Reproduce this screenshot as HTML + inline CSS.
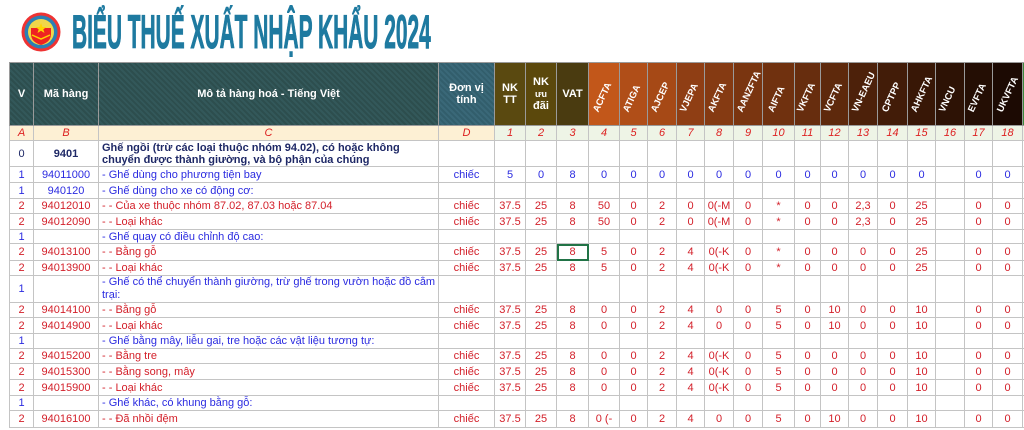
<!DOCTYPE html>
<html><head><meta charset="utf-8"><style>
body{margin:0;width:1024px;height:430px;overflow:hidden;background:#fff;font-family:"Liberation Sans",Arial,sans-serif;position:relative}
.title{position:absolute;left:72px;top:4px;font-weight:bold;font-size:47px;color:#1e7aa0;white-space:nowrap;transform:scaleX(0.445);transform-origin:0 0;-webkit-text-stroke:1px #1e7aa0}
.logo{position:absolute;left:21px;top:11px;width:40px;height:42px}
table{position:absolute;left:9px;top:62px;width:1015px;border-collapse:collapse;table-layout:fixed;font-size:11px}
td{border:1px solid #c4c4c4;padding:0;overflow:hidden;white-space:nowrap;text-align:center;vertical-align:middle}
tr.h td{height:62px;color:#fff;font-weight:bold;font-size:11px;border-color:#9a9a9a;overflow:visible}
.g{background:repeating-linear-gradient(45deg,#2d4e4e 0 2px,#33585a 2px 4px)}
.gb{background:repeating-linear-gradient(45deg,#325e6c 0 2px,#3a6878 2px 4px)}
.r{display:inline-block;transform:rotate(-65deg);white-space:nowrap;font-size:9.5px;width:10px;text-indent:-14px}
tr.l td{height:14px;color:#d22;font-style:italic;background:#eef4e6;font-size:11px}
tr.l td.c{background:#fdf0d4}
td.d{text-align:left;padding-left:3px}
.b0 td{color:#1e2866;font-weight:bold}
.b1 td{color:#2b2be0}
.b2 td{color:#d3202a}
</style></head><body>
<svg class="logo" viewBox="0 0 40 42"><circle cx="20" cy="21" r="19.5" fill="#e33"/><circle cx="20" cy="21" r="16.5" fill="#2b7fb5"/><circle cx="20" cy="21" r="13" fill="#f1d64a"/><path d="M10 17 h20 v6 q0 8 -10 11 q-10 -3 -10 -11z" fill="#e22"/><polygon points="20,12 21.5,16 25.5,16 22.3,18.4 23.5,22 20,19.8 16.5,22 17.7,18.4 14.5,16 18.5,16" fill="#ffd400"/><path d="M11 24 l9 4 l9 -4" stroke="#ffd400" stroke-width="1.5" fill="none"/></svg>
<div class="title">BIỂU THUẾ XUẤT NHẬP KHẨU 2024</div>
<table>
<colgroup><col style="width:24px"><col style="width:65px"><col style="width:340px"><col style="width:56px"><col style="width:31px"><col style="width:31px"><col style="width:32px"><col style="width:31px"><col style="width:28px"><col style="width:29px"><col style="width:28px"><col style="width:29px"><col style="width:29px"><col style="width:32px"><col style="width:26px"><col style="width:28px"><col style="width:29px"><col style="width:30px"><col style="width:28px"><col style="width:29px"><col style="width:28px"><col style="width:30px"><col style="width:2px"></colgroup>
<tr class="h"><td class="g">V</td><td class="g">Mã hàng</td><td class="g">Mô tả hàng hoá - Tiếng Việt</td><td class="gb">Đơn vị<br>tính</td>
<td style="background:#5a4910">NK<br>TT</td><td style="background:#5b480c">NK<br><span style="font-size:9px">ưu</span><br>đãi</td><td style="background:#4a3b10">VAT</td>
<td style="background:#c2571a"><span class="r">ACFTA</span></td><td style="background:#b04e18"><span class="r">ATIGA</span></td><td style="background:#a64916"><span class="r">AJCEP</span></td><td style="background:#8f3e14"><span class="r">VJEPA</span></td><td style="background:#853a12"><span class="r">AKFTA</span></td><td style="background:#7a3510"><span class="r">AANZFTA</span></td><td style="background:#70310f"><span class="r">AIFTA</span></td><td style="background:#672d0e"><span class="r">VKFTA</span></td><td style="background:#5e290c"><span class="r">VCFTA</span></td><td style="background:#4d210a"><span class="r">VN-EAEU</span></td><td style="background:#421c08"><span class="r">CPTPP</span></td><td style="background:#381706"><span class="r">AHKFTA</span></td><td style="background:#2d1205"><span class="r">VNCU</span></td><td style="background:#240e04"><span class="r">EVFTA</span></td><td style="background:#1c0a03"><span class="r">UKVFTA</span></td><td style="background:#3c8a3c"></td></tr>
<tr class="l"><td class="c">A</td><td class="c">B</td><td class="c">C</td><td class="c">D</td><td>1</td><td>2</td><td>3</td><td>4</td><td>5</td><td>6</td><td>7</td><td>8</td><td>9</td><td>10</td><td>11</td><td>12</td><td>13</td><td>14</td><td>15</td><td>16</td><td>17</td><td>18</td><td></td></tr>
<tr class="b0" style="height:26px"><td style="font-weight:normal">0</td><td>9401</td><td class="d" style="white-space:normal;line-height:12px">Ghế ngồi (trừ các loại thuộc nhóm 94.02), có hoặc không chuyển được thành giường, và bộ phận của chúng</td><td></td><td></td><td></td><td></td><td></td><td></td><td></td><td></td><td></td><td></td><td></td><td></td><td></td><td></td><td></td><td></td><td></td><td></td><td></td><td></td></tr>
<tr class="b1" style="height:16px"><td>1</td><td>94011000</td><td class="d">- Ghế dùng cho phương tiện bay</td><td>chiếc</td><td>5</td><td>0</td><td>8</td><td>0</td><td>0</td><td>0</td><td>0</td><td>0</td><td>0</td><td>0</td><td>0</td><td>0</td><td>0</td><td>0</td><td>0</td><td></td><td>0</td><td>0</td><td></td></tr>
<tr class="b1" style="height:16px"><td>1</td><td>940120</td><td class="d">- Ghế dùng cho xe có động cơ:</td><td></td><td></td><td></td><td></td><td></td><td></td><td></td><td></td><td></td><td></td><td></td><td></td><td></td><td></td><td></td><td></td><td></td><td></td><td></td><td></td></tr>
<tr class="b2" style="height:15px"><td>2</td><td>94012010</td><td class="d">- - Của xe thuộc nhóm 87.02, 87.03 hoặc 87.04</td><td>chiếc</td><td>37.5</td><td>25</td><td>8</td><td>50</td><td>0</td><td>2</td><td>0</td><td>0(-M</td><td>0</td><td>*</td><td>0</td><td>0</td><td>2,3</td><td>0</td><td>25</td><td></td><td>0</td><td>0</td><td></td></tr>
<tr class="b2" style="height:16px"><td>2</td><td>94012090</td><td class="d">- - Loại khác</td><td>chiếc</td><td>37.5</td><td>25</td><td>8</td><td>50</td><td>0</td><td>2</td><td>0</td><td>0(-M</td><td>0</td><td>*</td><td>0</td><td>0</td><td>2,3</td><td>0</td><td>25</td><td></td><td>0</td><td>0</td><td></td></tr>
<tr class="b1" style="height:14px"><td>1</td><td></td><td class="d">- Ghế quay có điều chỉnh độ cao:</td><td></td><td></td><td></td><td></td><td></td><td></td><td></td><td></td><td></td><td></td><td></td><td></td><td></td><td></td><td></td><td></td><td></td><td></td><td></td><td></td></tr>
<tr class="b2" style="height:17px"><td>2</td><td>94013100</td><td class="d">- - Bằng gỗ</td><td>chiếc</td><td>37.5</td><td>25</td><td style="outline:2px solid #217346;outline-offset:-2px">8</td><td>5</td><td>0</td><td>2</td><td>4</td><td>0(-K</td><td>0</td><td>*</td><td>0</td><td>0</td><td>0</td><td>0</td><td>25</td><td></td><td>0</td><td>0</td><td></td></tr>
<tr class="b2" style="height:15px"><td>2</td><td>94013900</td><td class="d">- - Loại khác</td><td>chiếc</td><td>37.5</td><td>25</td><td>8</td><td>5</td><td>0</td><td>2</td><td>4</td><td>0(-K</td><td>0</td><td>*</td><td>0</td><td>0</td><td>0</td><td>0</td><td>25</td><td></td><td>0</td><td>0</td><td></td></tr>
<tr class="b1" style="height:27px"><td>1</td><td></td><td class="d" style="white-space:normal;line-height:13px">- Ghế có thể chuyển thành giường, trừ ghế trong vườn hoặc đồ cắm trại:</td><td></td><td></td><td></td><td></td><td></td><td></td><td></td><td></td><td></td><td></td><td></td><td></td><td></td><td></td><td></td><td></td><td></td><td></td><td></td><td></td></tr>
<tr class="b2" style="height:15px"><td>2</td><td>94014100</td><td class="d">- - Bằng gỗ</td><td>chiếc</td><td>37.5</td><td>25</td><td>8</td><td>0</td><td>0</td><td>2</td><td>4</td><td>0</td><td>0</td><td>5</td><td>0</td><td>10</td><td>0</td><td>0</td><td>10</td><td></td><td>0</td><td>0</td><td></td></tr>
<tr class="b2" style="height:16px"><td>2</td><td>94014900</td><td class="d">- - Loại khác</td><td>chiếc</td><td>37.5</td><td>25</td><td>8</td><td>0</td><td>0</td><td>2</td><td>4</td><td>0</td><td>0</td><td>5</td><td>0</td><td>10</td><td>0</td><td>0</td><td>10</td><td></td><td>0</td><td>0</td><td></td></tr>
<tr class="b1" style="height:15px"><td>1</td><td></td><td class="d">- Ghế bằng mây, liễu gai, tre hoặc các vật liệu tương tự:</td><td></td><td></td><td></td><td></td><td></td><td></td><td></td><td></td><td></td><td></td><td></td><td></td><td></td><td></td><td></td><td></td><td></td><td></td><td></td><td></td></tr>
<tr class="b2" style="height:15px"><td>2</td><td>94015200</td><td class="d">- - Bằng tre</td><td>chiếc</td><td>37.5</td><td>25</td><td>8</td><td>0</td><td>0</td><td>2</td><td>4</td><td>0(-K</td><td>0</td><td>5</td><td>0</td><td>0</td><td>0</td><td>0</td><td>10</td><td></td><td>0</td><td>0</td><td></td></tr>
<tr class="b2" style="height:16px"><td>2</td><td>94015300</td><td class="d">- - Bằng song, mây</td><td>chiếc</td><td>37.5</td><td>25</td><td>8</td><td>0</td><td>0</td><td>2</td><td>4</td><td>0(-K</td><td>0</td><td>5</td><td>0</td><td>0</td><td>0</td><td>0</td><td>10</td><td></td><td>0</td><td>0</td><td></td></tr>
<tr class="b2" style="height:16px"><td>2</td><td>94015900</td><td class="d">- - Loại khác</td><td>chiếc</td><td>37.5</td><td>25</td><td>8</td><td>0</td><td>0</td><td>2</td><td>4</td><td>0(-K</td><td>0</td><td>5</td><td>0</td><td>0</td><td>0</td><td>0</td><td>10</td><td></td><td>0</td><td>0</td><td></td></tr>
<tr class="b1" style="height:15px"><td>1</td><td></td><td class="d">- Ghế khác, có khung bằng gỗ:</td><td></td><td></td><td></td><td></td><td></td><td></td><td></td><td></td><td></td><td></td><td></td><td></td><td></td><td></td><td></td><td></td><td></td><td></td><td></td><td></td></tr>
<tr class="b2" style="height:17px"><td>2</td><td>94016100</td><td class="d">- - Đã nhồi đệm</td><td>chiếc</td><td>37.5</td><td>25</td><td>8</td><td>0 (-</td><td>0</td><td>2</td><td>4</td><td>0</td><td>0</td><td>5</td><td>0</td><td>10</td><td>0</td><td>0</td><td>10</td><td></td><td>0</td><td>0</td><td></td></tr>
</table>
</body></html>
